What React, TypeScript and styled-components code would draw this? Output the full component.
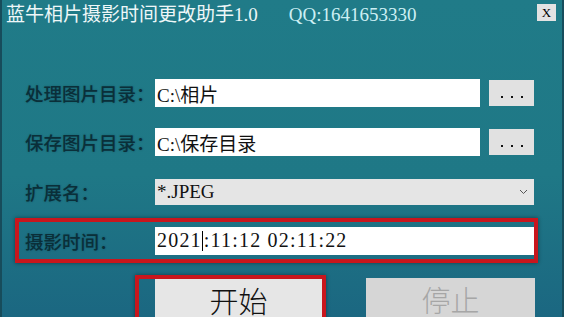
import React from "react";
import styled, { createGlobalStyle } from "styled-components";

const Global = createGlobalStyle`
  html, body { margin: 0; padding: 0; overflow: hidden; background: #1f7a87; }
`;

const FONT = `"Liberation Serif", "Noto Sans CJK SC", serif`;

const Window = styled.div`
  width: 564px;
  height: 317px;
  box-sizing: border-box;
  overflow: hidden;
  border-left: 2px solid #174c5b;
  border-right: 2px solid #174e5d;
  background: linear-gradient(180deg, #207b88 0%, #1f7886 55%, #1b6781 100%);
  display: flex;
  flex-direction: column;
  font-family: ${FONT};
`;

const TitleBar = styled.div`
  display: flex;
  align-items: flex-start;
  height: 30px;
  flex-shrink: 0;
  padding: 0 6px 0 4px;
`;

const TitleText = styled.div<{ $gap?: number; $color: string }>`
  margin-top: 4px;
  margin-left: ${(p) => p.$gap ?? 0}px;
  font-size: 19px;
  line-height: 22px;
  color: ${(p) => p.$color};
  white-space: nowrap;
`;

const CloseButton = styled.div`
  margin-left: auto;
  margin-top: 4px;
  width: 19px;
  height: 17px;
  background: #e3e3e3;
  display: flex;
  align-items: center;
  justify-content: center;
  font-size: 13px;
  color: #000;
`;

const Form = styled.div`
  display: flex;
  flex-direction: column;
  padding-left: 13px;
`;

const Row = styled.div<{ $top: number; $h: number; $highlight?: boolean }>`
  width: 523px;
  height: ${(p) => p.$h}px;
  margin-top: ${(p) => p.$top}px;
  box-sizing: border-box;
  border: 4px solid ${(p) => (p.$highlight ? "#c8161d" : "transparent")};
  box-shadow: ${(p) => (p.$highlight ? "0 0 4px rgba(0,0,0,0.45)" : "none")};
  padding-left: 6px;
  display: grid;
  grid-template-columns: 130px 1fr;
  align-items: center;
`;

const Label = styled.div`
  font-size: 18.5px;
  font-weight: 500;
  color: #0a2f39;
  text-shadow: 0 0 2px rgba(0, 30, 40, 0.3);
  white-space: nowrap;
`;

const FieldGroup = styled.div`
  display: flex;
  align-items: center;
  gap: 9px;
`;

const TextField = styled.div<{ $spaced?: boolean }>`
  flex: 1;
  height: 28px;
  box-sizing: border-box;
  background: #ffffff;
  padding-left: 2px;
  display: flex;
  align-items: center;
  font-size: ${(p) => (p.$spaced ? 20 : 19)}px;
  letter-spacing: ${(p) => (p.$spaced ? "1.2px" : "0")};
  color: #111;
  white-space: nowrap;
`;

const Caret = styled.span`
  display: inline-block;
  width: 1px;
  height: 20px;
  background: #000;
  margin: 0 1px 0 0;
`;

const BrowseButton = styled.div`
  width: 45px;
  height: 26px;
  background: #e1e1e1;
  display: flex;
  align-items: center;
  justify-content: center;
  gap: 8px;
  padding-top: 8px;
  box-sizing: border-box;
`;

const Dot = styled.span`
  width: 2px;
  height: 2px;
  background: #111;
`;

const Select = styled.div`
  height: 26px;
  background: #e5e5e5;
  padding: 0 6px 0 2px;
  display: flex;
  align-items: center;
  justify-content: space-between;
  font-size: 19px;
  color: #111;
`;

const ButtonRow = styled.div`
  display: flex;
  align-items: flex-start;
  padding-left: 133px;
  margin-top: 12px;
`;

const StartFrame = styled.div`
  border: 4px solid #c8161d;
  box-shadow: 0 0 4px rgba(0, 0, 0, 0.45);
  padding-left: 16px;
  display: flex;
`;

const ActionButton = styled.div<{ $disabled?: boolean; $w: number; $mt?: number }>`
  width: ${(p) => p.$w}px;
  height: 42px;
  margin-top: ${(p) => p.$mt ?? 0}px;
  margin-left: ${(p) => (p.$disabled ? 40 : 0)}px;
  background: ${(p) => (p.$disabled ? "#d6d6d6" : "#e6e6e6")};
  color: ${(p) => (p.$disabled ? "#a6a6a6" : "#111")};
  display: flex;
  align-items: center;
  justify-content: center;
  font-size: 29px;
  line-height: 32px;
  font-family: "Noto Sans CJK SC", sans-serif;
  font-weight: 300;
`;

const Chevron = () => (
  <svg width="9" height="6" viewBox="0 0 9 6">
    <polyline points="1,1 4.5,4.5 8,1" fill="none" stroke="#555" strokeWidth="1" />
  </svg>
);

const Dots = () => (
  <BrowseButton>
    <Dot />
    <Dot />
    <Dot />
  </BrowseButton>
);

export default function App() {
  return (
    <>
      <Global />
      <Window>
        <TitleBar>
          <TitleText $color="#eef7f8">蓝牛相片摄影时间更改助手1.0</TitleText>
          <TitleText $gap={31} $color="#cdeff4">QQ:1641653330</TitleText>
          <CloseButton>X</CloseButton>
        </TitleBar>
        <Form>
          <Row $top={45} $h={36}>
            <Label>处理图片目录：</Label>
            <FieldGroup>
              <TextField>C:\相片</TextField>
              <Dots />
            </FieldGroup>
          </Row>
          <Row $top={13} $h={36}>
            <Label>保存图片目录：</Label>
            <FieldGroup>
              <TextField>C:\保存目录</TextField>
              <Dots />
            </FieldGroup>
          </Row>
          <Row $top={14} $h={36}>
            <Label>扩展名：</Label>
            <Select>
              <span>*.JPEG</span>
              <Chevron />
            </Select>
          </Row>
          <Row $top={8} $h={45} $highlight>
            <Label>摄影时间：</Label>
            <TextField $spaced>
              2021<Caret />:11:12 02:11:22
            </TextField>
          </Row>
        </Form>
        <ButtonRow>
          <StartFrame>
            <ActionButton $w={167}>开始</ActionButton>
          </StartFrame>
          <ActionButton $w={169} $mt={3} $disabled>
            停止
          </ActionButton>
        </ButtonRow>
      </Window>
    </>
  );
}
